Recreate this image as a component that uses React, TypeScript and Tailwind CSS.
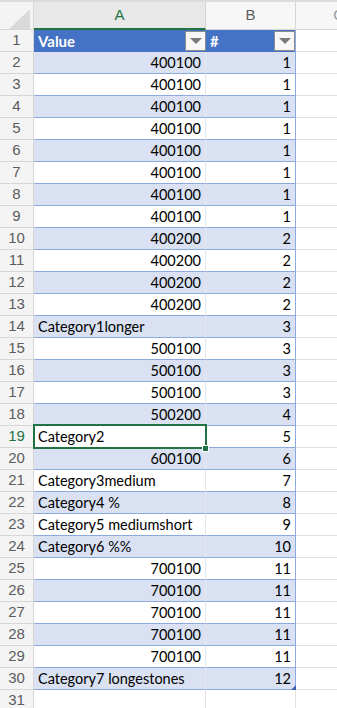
const rows: [string, number][] = [
  ['400100', 1],
  ['400100', 1],
  ['400100', 1],
  ['400100', 1],
  ['400100', 1],
  ['400100', 1],
  ['400100', 1],
  ['400100', 1],
  ['400200', 2],
  ['400200', 2],
  ['400200', 2],
  ['400200', 2],
  ['Category1longer', 3],
  ['500100', 3],
  ['500100', 3],
  ['500100', 3],
  ['500200', 4],
  ['Category2', 5],
  ['600100', 6],
  ['Category3medium', 7],
  ['Category4 %', 8],
  ['Category5 mediumshort', 9],
  ['Category6 %%', 10],
  ['700100', 11],
  ['700100', 11],
  ['700100', 11],
  ['700100', 11],
  ['700100', 11],
  ['Category7 longestones', 12],
];

const cellFont = { fontFamily: 'Lato, "Open Sans", sans-serif' };

function FilterButton() {
  return (
    <div className="absolute right-0 top-[1px] w-[21px] h-[20px] bg-[#f7f7f7] border border-[#8c8c8c] flex items-center justify-center">
      <div className="w-0 h-0 border-l-[6px] border-r-[6px] border-t-[6px] border-l-transparent border-r-transparent border-t-[#7a7a7a]" />
    </div>
  );
}

function RowNum({ n, active }: { n: number; active?: boolean }) {
  return (
    <div
      className={`w-[34px] shrink-0 h-full bg-[#f4f4f4] border-r border-b border-[#d6d6d6] flex items-center justify-center text-[15px] ${active ? 'text-[#217346]' : 'text-[#5c5c5c]'}`}
      style={{ fontFamily: '"Liberation Sans", Arial, sans-serif' }}
    >
      {n}
    </div>
  );
}

export default function App() {
  return (
    <div className="w-[337px] h-[708px] bg-white overflow-hidden select-none" style={cellFont}>
      {/* column headers */}
      <div className="flex h-[30px] border-t-[2px] border-[#dcdcdc]" style={{ fontFamily: '"Liberation Sans", Arial, sans-serif' }}>
        <div className="w-[34px] shrink-0 h-full bg-[#f4f4f4] border-r border-b border-[#d6d6d6] relative">
          <svg className="absolute left-[9px] top-[7px]" width="21" height="20" viewBox="0 0 21 20">
            <polygon points="21,0 21,20 0,20" fill="#dadada" />
          </svg>
        </div>
        <div className="w-[172px] shrink-0 h-full bg-[#e8e8e8] border-r border-[#d6d6d6] border-b-2 border-b-[#217346] flex items-center justify-center text-[15px] text-[#217346]">
          A
        </div>
        <div className="w-[90px] shrink-0 h-full bg-[#f7f7f7] border-r border-b border-[#d6d6d6] flex items-center justify-center text-[15px] text-[#5c5c5c]">
          B
        </div>
        <div className="flex-1 h-full bg-[#f7f7f7] border-b border-[#d6d6d6] flex items-center justify-end text-[15px] text-[#9a9a9a]">
          <span className="translate-x-[7px]">C</span>
        </div>
      </div>

      {/* table header row */}
      <div className="flex h-[22px]">
        <RowNum n={1} />
        <div className="w-[172px] shrink-0 h-full bg-[#4472c4] relative flex items-center pl-[4px] pt-[1px] text-[15px] font-bold text-white">
          Value
          <FilterButton />
        </div>
        <div className="w-[90px] shrink-0 h-full bg-[#4472c4] border-r border-[#8ea9db] relative flex items-center pl-[4px] pt-[1px] text-[15px] font-bold text-white">
          #
          <FilterButton />
        </div>
        <div className="flex-1 h-full border-b border-[#e1e1e1]" />
      </div>

      {rows.map(([v, n], i) => {
        const rowNo = i + 2;
        const banded = rowNo % 2 === 0;
        const isNum = /^\d+$/.test(v);
        const selected = rowNo === 19;
        const last = rowNo === 30;
        return (
          <div key={rowNo} className="flex h-[22px]">
            <RowNum n={rowNo} active={selected} />
            <div
              className={`w-[172px] shrink-0 h-full border-b border-[#8ea9db] border-r border-r-[#e3e6ec] relative flex items-center pt-[1px] text-[14.5px] text-black px-[4px] ${banded ? 'bg-[#d9e1f2]' : 'bg-white'} ${isNum ? 'justify-end' : 'justify-start'}`}
            >
              {v}
              {selected && (
                <>
                  <div className="absolute z-10 -left-[1px] -top-[2px] w-[174px] h-[25px] border-2 border-[#217346]" />
                  <div className="absolute z-20 -right-[4px] bottom-[-5px] w-[7px] h-[7px] bg-[#217346] border border-white" />
                </>
              )}
            </div>
            <div
              className={`w-[90px] shrink-0 h-full border-b border-r border-[#8ea9db] relative flex items-center justify-end px-[4px] pt-[1px] text-[14.5px] text-black ${banded ? 'bg-[#d9e1f2]' : 'bg-white'}`}
            >
              {n}
              {last && (
                <svg className="absolute right-[-1px] bottom-[-1px]" width="5" height="5" viewBox="0 0 5 5">
                  <polygon points="5,0 5,5 0,5" fill="#3b5fb0" />
                </svg>
              )}
            </div>
            <div className="flex-1 h-full border-b border-[#e1e1e1]" />
          </div>
        );
      })}

      <div className="flex h-[22px]">
        <RowNum n={31} />
        <div className="w-[172px] shrink-0 h-full border-r border-b border-[#e1e1e1]" />
        <div className="w-[90px] shrink-0 h-full border-r border-b border-[#e1e1e1]" />
        <div className="flex-1 h-full border-b border-[#e1e1e1]" />
      </div>
    </div>
  );
}
